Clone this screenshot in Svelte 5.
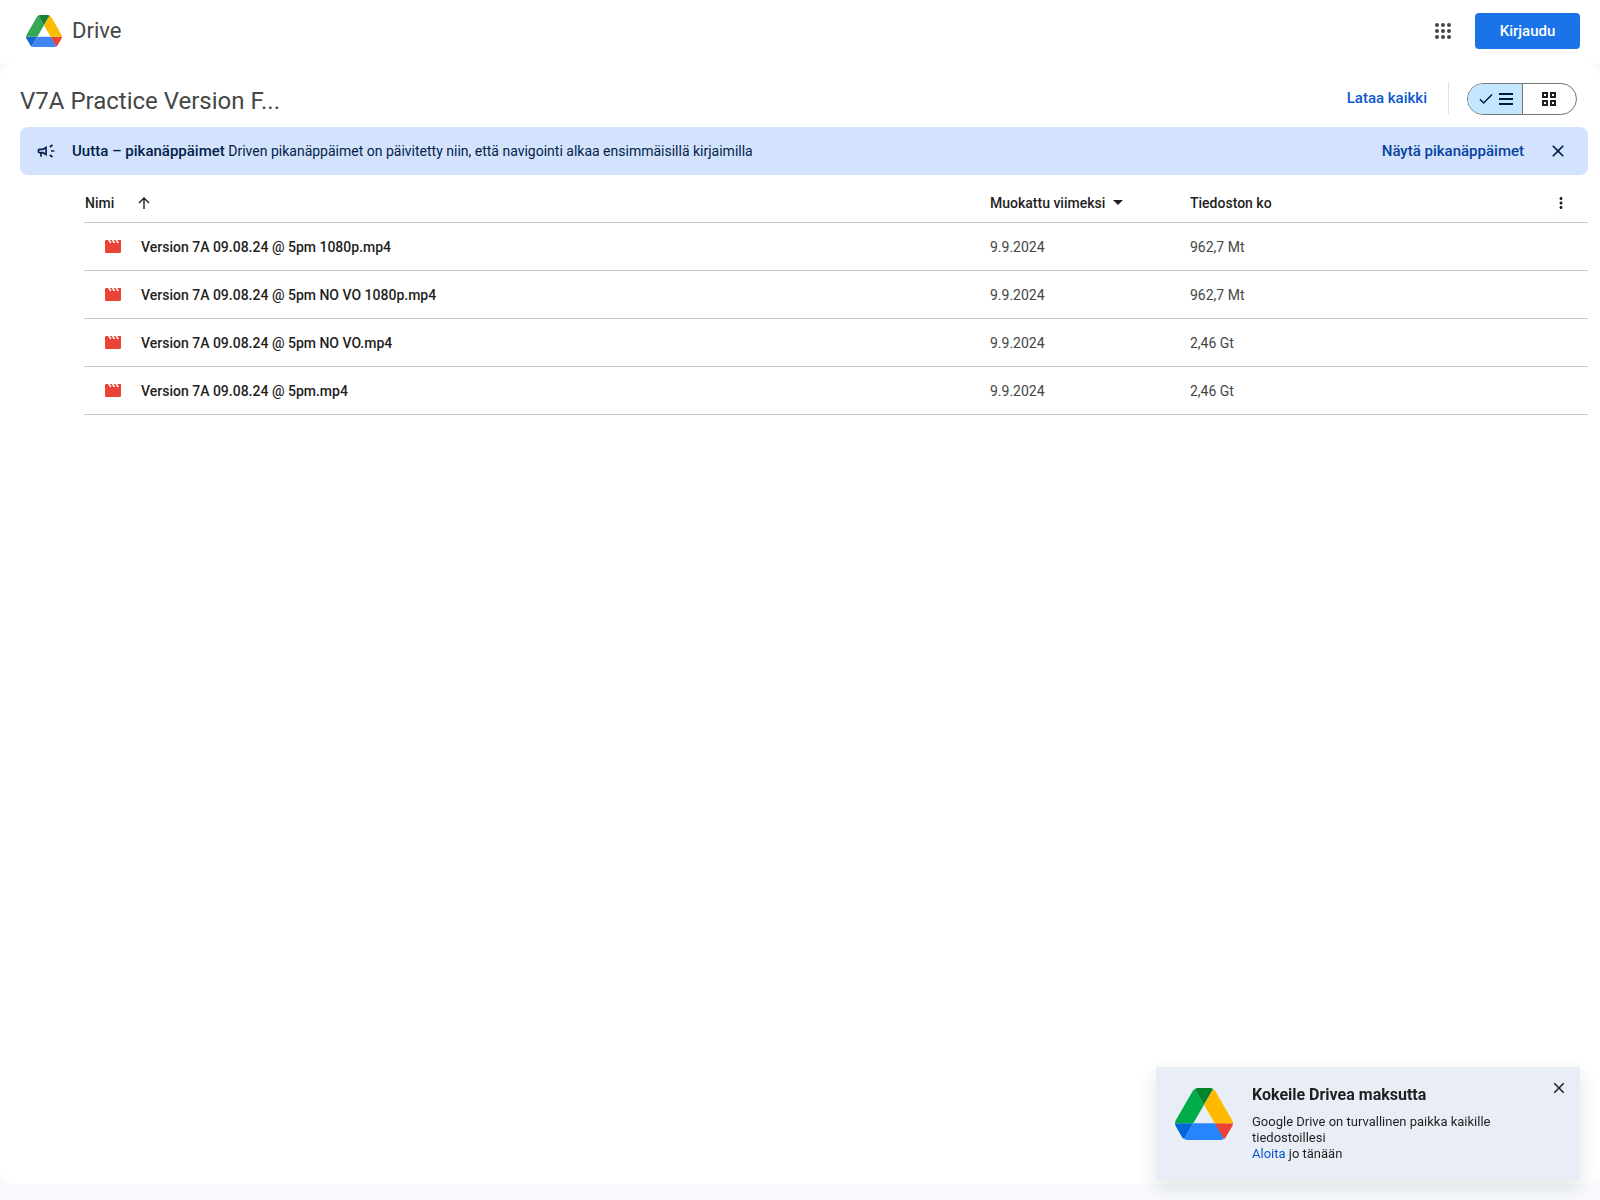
<script>
	/**
	 * @typedef {Object} DriveFile
	 * @property {string} name
	 * @property {string} modified
	 * @property {string} size
	 */

	/** @type {DriveFile[]} */
	const files = [
		{ name: 'Version 7A 09.08.24 @ 5pm 1080p.mp4', modified: '9.9.2024', size: '962,7 Mt' },
		{ name: 'Version 7A 09.08.24 @ 5pm NO VO 1080p.mp4', modified: '9.9.2024', size: '962,7 Mt' },
		{ name: 'Version 7A 09.08.24 @ 5pm NO VO.mp4', modified: '9.9.2024', size: '2,46 Gt' },
		{ name: 'Version 7A 09.08.24 @ 5pm.mp4', modified: '9.9.2024', size: '2,46 Gt' }
	];

	const headerColors = ['#1967d2', '#34a853', '#ea4335', '#188038', '#4285f4', '#fbbc04'];
	const promoColors = ['#0066da', '#00ac47', '#ea4335', '#00832d', '#2684fc', '#ffba00'];

	let view = $state('list');
	let showBanner = $state(true);
	let showPromo = $state(true);
	let ascending = $state(true);

	let sorted = $derived(ascending ? files : [...files].reverse());
</script>

<svelte:head>
	<title>V7A Practice Version F... – Google Drive</title>
</svelte:head>

{#snippet logo(colors)}
	<svg class="logo" viewBox="0 0 87.3 78" aria-hidden="true">
		<path fill={colors[0]} d="m6.6 66.85 3.85 6.65c.8 1.4 1.95 2.5 3.3 3.3l13.75-23.8h-27.5c0 1.55.4 3.1 1.2 4.5z" />
		<path fill={colors[1]} d="m43.65 25-13.75-23.8c-1.35.8-2.5 1.9-3.3 3.3l-25.4 44a9.06 9.06 0 0 0-1.2 4.5h27.5z" />
		<path fill={colors[2]} d="m73.55 76.8c1.35-.8 2.5-1.9 3.3-3.3l1.6-2.75 7.65-13.25c.8-1.4 1.2-2.95 1.2-4.5h-27.5l5.85 11.5z" />
		<path fill={colors[3]} d="m43.65 25 13.75-23.8c-1.35-.8-2.9-1.2-4.5-1.2h-18.5c-1.6 0-3.15.45-4.5 1.2z" />
		<path fill={colors[4]} d="m59.8 53h-32.3l-13.75 23.8c1.35.8 2.9 1.2 4.5 1.2h50.8c1.6 0 3.15-.45 4.5-1.2z" />
		<path fill={colors[5]} d="m73.4 26.5-12.7-22c-.8-1.4-1.95-2.5-3.3-3.3l-13.75 23.8 16.15 28h27.45c0-1.55-.4-3.1-1.2-4.5z" />
	</svg>
{/snippet}

{#snippet closeIcon()}
	<svg viewBox="0 0 24 24" aria-hidden="true">
		<path d="M19 6.41 17.59 5 12 10.59 6.41 5 5 6.41 10.59 12 5 17.59 6.41 19 12 13.41 17.59 19 19 17.59 13.41 12z" />
	</svg>
{/snippet}

<div class="page">
	<header class="topbar">
		<a class="brand" href="/">
			{@render logo(headerColors)}
			<span>Drive</span>
		</a>
		<div class="account">
			<button class="icon-button" type="button" aria-label="Google-sovellukset">
				<svg class="apps" viewBox="0 0 24 24" aria-hidden="true">
					{#each [6, 12, 18] as cy}
						{#each [6, 12, 18] as cx}
							<circle {cx} {cy} r="2" />
						{/each}
					{/each}
				</svg>
			</button>
			<a class="sign-in" href="/login">Kirjaudu</a>
		</div>
	</header>

	<main>
		<div class="toolbar">
			<h1>V7A Practice Version F...</h1>
			<div class="actions">
				<button class="download" type="button">Lataa kaikki</button>
				<div class="view-toggle">
					<button type="button" aria-label="Luettelo" aria-pressed={view === 'list'} onclick={() => (view = 'list')}>
						{#if view === 'list'}
							<svg class="check" viewBox="0 0 18 18" aria-hidden="true">
								<path d="M6.61 11.89 3.5 8.78 2.44 9.84l4.17 4.16 8.95-8.95L14.5 4z" />
							</svg>
						{/if}
						<svg class="lines" viewBox="0 0 14 12" aria-hidden="true">
							<path d="M0 0h14v2H0zM0 5h14v2H0zM0 10h14v2H0z" />
						</svg>
					</button>
					<button type="button" aria-label="Ruudukko" aria-pressed={view === 'grid'} onclick={() => (view = 'grid')}>
						<svg class="grid" viewBox="0 0 14 14" aria-hidden="true">
							<path d="M1 1h4v4H1zM9 1h4v4H9zM1 9h4v4H1zM9 9h4v4H9z" />
						</svg>
					</button>
				</div>
			</div>
		</div>

		{#if showBanner}
			<div class="banner">
				<svg class="campaign" viewBox="0 0 24 24" aria-hidden="true">
					<path
						d="M18 11v2h4v-2h-4zm-2 6.61c.96.71 2.21 1.65 3.2 2.39.4-.53.8-1.07 1.2-1.6-.99-.74-2.24-1.68-3.2-2.4-.4.54-.8 1.08-1.2 1.61zM20.4 5.6c-.4-.53-.8-1.07-1.2-1.6-.99.74-2.24 1.68-3.2 2.4.4.53.8 1.07 1.2 1.6.96-.72 2.21-1.65 3.2-2.4zM4 9c-1.1 0-2 .9-2 2v2c0 1.1.9 2 2 2h1v4h2v-4h1l5 3V6L8 9H4zm5.03 1.71L11 9.53v4.94l-1.97-1.18-.48-.29H4v-2h4.55l.48-.29z"
					/>
				</svg>
				<p><strong>Uutta – pikanäppäimet</strong> Driven pikanäppäimet on päivitetty niin, että navigointi alkaa ensimmäisillä kirjaimilla</p>
				<button class="shortcuts" type="button">Näytä pikanäppäimet</button>
				<button class="icon-button" type="button" aria-label="Sulje ilmoitus" onclick={() => (showBanner = false)}>
					{@render closeIcon()}
				</button>
			</div>
		{/if}

		<table>
			<thead>
				<tr>
					<th class="name">
						<button class="sort" type="button" onclick={() => (ascending = !ascending)}>
							Nimi
							<svg class="arrow" viewBox="0 0 12 12" aria-hidden="true">
								<path d="M6 12V1M1 6l5-5 5 5" />
							</svg>
						</button>
					</th>
					<th class="modified">
						<button class="sort-menu" type="button">
							Muokattu viimeksi
							<svg viewBox="0 0 10 5" aria-hidden="true"><path d="M0 0l5 5 5-5z" /></svg>
						</button>
					</th>
					<th class="size"><span>Tiedoston koko</span></th>
					<th class="menu">
						<button class="icon-button" type="button" aria-label="Lisää">
							<svg viewBox="0 0 24 24" aria-hidden="true">
								<path d="M12 8c1.1 0 2-.9 2-2s-.9-2-2-2-2 .9-2 2 .9 2 2 2zm0 2c-1.1 0-2 .9-2 2s.9 2 2 2 2-.9 2-2-.9-2-2-2zm0 6c-1.1 0-2 .9-2 2s.9 2 2 2 2-.9 2-2-.9-2-2-2z" />
							</svg>
						</button>
					</th>
				</tr>
			</thead>
			<tbody>
				{#each sorted as file}
					<tr>
						<td>
							<div class="file">
								<svg viewBox="0 0 16 13" aria-hidden="true">
									<path d="M1.2 0H3l1.8 3h1.8L4.9 0h1.8l1.8 3h1.8L8.6 0h1.8l1.8 3H14L12.3 0H16v11.8q0 1.2-1.2 1.2H1.2Q0 13 0 11.8V1.2Q0 0 1.2 0z" />
								</svg>
								{file.name}
							</div>
						</td>
						<td>{file.modified}</td>
						<td>{file.size}</td>
						<td></td>
					</tr>
				{/each}
			</tbody>
		</table>
	</main>
</div>

{#if showPromo}
	<aside class="promo">
		{@render logo(promoColors)}
		<div class="promo-text">
			<h2>Kokeile Drivea maksutta</h2>
			<p>Google Drive on turvallinen paikka kaikille tiedostoillesi<br /><a href="/start">Aloita</a> jo tänään</p>
		</div>
		<button class="icon-button" type="button" aria-label="Sulje" onclick={() => (showPromo = false)}>
			{@render closeIcon()}
		</button>
	</aside>
{/if}

<style>
	:global(body) {
		background: #f8fafd;
		color: #1f1f1f;
		font-family: Roboto, 'Liberation Sans', sans-serif;
		font-size: 14px;
		line-height: 20px;
	}

	.page {
		display: flex;
		flex-direction: column;
		box-sizing: border-box;
		min-height: 100vh;
		padding-bottom: 16px;
	}

	button {
		border: 0;
		padding: 0;
		background: none;
		color: inherit;
		font: inherit;
		cursor: pointer;
	}

	a {
		text-decoration: none;
	}

	svg {
		display: block;
		flex: none;
		fill: currentColor;
	}

	.icon-button {
		display: flex;
		align-items: center;
		justify-content: center;
		width: 40px;
		height: 40px;
		border-radius: 50%;
	}

	.topbar {
		display: flex;
		align-items: center;
		justify-content: space-between;
		box-sizing: border-box;
		height: 63px;
		padding: 0 20px 1px 26px;
		background: #fff;
	}

	.brand {
		display: flex;
		align-items: center;
		gap: 10px;
		color: #444746;
		font-size: 22px;
		line-height: 26px;
	}

	.brand .logo {
		width: 36px;
		height: 34px;
	}

	.account {
		display: flex;
		align-items: center;
		gap: 12px;
	}

	.apps {
		width: 24px;
		height: 24px;
		color: #444746;
	}

	.sign-in {
		box-sizing: border-box;
		width: 105px;
		padding: 8px 0;
		border-radius: 4px;
		background: #1a73e8;
		color: #fff;
		font-size: 15px;
		font-weight: 500;
		text-align: center;
	}

	main {
		flex: 1;
		padding: 0 12px 0 20px;
		border-radius: 16px;
		background: #fff;
	}

	.toolbar {
		display: flex;
		align-items: center;
		justify-content: space-between;
		height: 64px;
		padding-top: 6px;
		box-sizing: border-box;
	}

	h1 {
		margin: 6px 0 0;
		color: #444746;
		font-size: 24px;
		font-weight: 400;
		line-height: 32px;
	}

	.actions {
		display: flex;
		align-items: center;
		padding-right: 11px;
	}

	.download {
		height: 32px;
		padding-right: 21px;
		border-right: 1px solid #dde3ea;
		color: #0b57d0;
		font-size: 15px;
		font-weight: 500;
	}

	.view-toggle {
		display: flex;
		box-sizing: border-box;
		width: 110px;
		height: 32px;
		margin: 2px 0 0 18px;
		border: 1px solid #747775;
		border-radius: 16px;
		overflow: hidden;
	}

	.view-toggle button {
		display: flex;
		flex: 1;
		align-items: center;
		justify-content: center;
		gap: 4px;
	}

	.view-toggle button + button {
		border-left: 1px solid #747775;
	}

	.view-toggle button[aria-pressed='true'] {
		background: #c2e7ff;
		color: #001d35;
	}

	.check {
		width: 18px;
		height: 18px;
	}

	.lines {
		width: 14px;
		height: 12px;
	}

	.grid {
		width: 14px;
		height: 14px;
		fill: none;
		stroke: currentColor;
		stroke-width: 2;
	}

	.banner {
		display: flex;
		align-items: center;
		height: 48px;
		padding: 0 10px 0 16px;
		border-radius: 8px;
		background: #d3e3fd;
		color: #041e49;
	}

	.banner p {
		flex: 1;
		margin: 0 16px;
	}

	.banner strong {
		font-size: 15px;
		font-weight: 500;
	}

	.campaign {
		width: 20px;
		height: 20px;
	}

	.shortcuts {
		margin-right: 14px;
		color: #0842a0;
		font-size: 15px;
		font-weight: 500;
	}

	.banner .icon-button svg {
		width: 20px;
		height: 20px;
	}

	table {
		width: calc(100% - 64px);
		margin-left: 64px;
		table-layout: fixed;
		border-collapse: collapse;
	}

	th,
	td {
		height: 47px;
		padding: 0;
		border-bottom: 1px solid #c7c7c7;
		text-align: left;
	}

	th {
		height: 39px;
		padding-top: 8px;
		font-weight: 500;
	}

	td {
		color: #444746;
	}

	.modified,
	.size {
		width: 200px;
	}

	.menu {
		width: 198px;
	}

	.menu .icon-button {
		height: 32px;
		margin: 0 7px 0 auto;
	}

	.menu svg {
		width: 18px;
		height: 18px;
	}

	.sort {
		display: flex;
		align-items: center;
		gap: 24px;
		padding-left: 1px;
	}

	.arrow {
		width: 12px;
		height: 12px;
		fill: none;
		stroke: currentColor;
		stroke-width: 1.4;
	}

	.sort-menu {
		display: flex;
		align-items: center;
		gap: 8px;
	}

	.sort-menu svg {
		width: 10px;
		height: 5px;
	}

	.size span {
		display: block;
		width: 82px;
		overflow: hidden;
		white-space: nowrap;
	}

	.file {
		display: flex;
		align-items: center;
		gap: 20px;
		padding-left: 21px;
		color: #1f1f1f;
		font-weight: 500;
	}

	.file svg {
		width: 16px;
		height: 13px;
		color: #ea4335;
	}

	.promo {
		position: fixed;
		right: 20px;
		bottom: 20px;
		display: flex;
		align-items: flex-start;
		box-sizing: border-box;
		width: 424px;
		padding: 18px 1px 16px 19px;
		border-radius: 2px;
		background: #e9eef6;
		box-shadow: 0 8px 20px rgba(60, 64, 67, 0.14);
	}

	.promo .logo {
		width: 58px;
		height: 52px;
		margin-top: 3px;
	}

	.promo-text {
		flex: 1;
		margin-left: 19px;
	}

	.promo h2 {
		margin: 0 0 9px;
		font-size: 16px;
		font-weight: 700;
		line-height: 20px;
	}

	.promo p {
		margin: 0 0 2px;
		font-size: 13px;
		line-height: 16px;
	}

	.promo a {
		color: #0b57d0;
	}

	.promo .icon-button {
		margin-top: -17px;
	}

	.promo .icon-button svg {
		width: 18px;
		height: 18px;
	}
</style>
